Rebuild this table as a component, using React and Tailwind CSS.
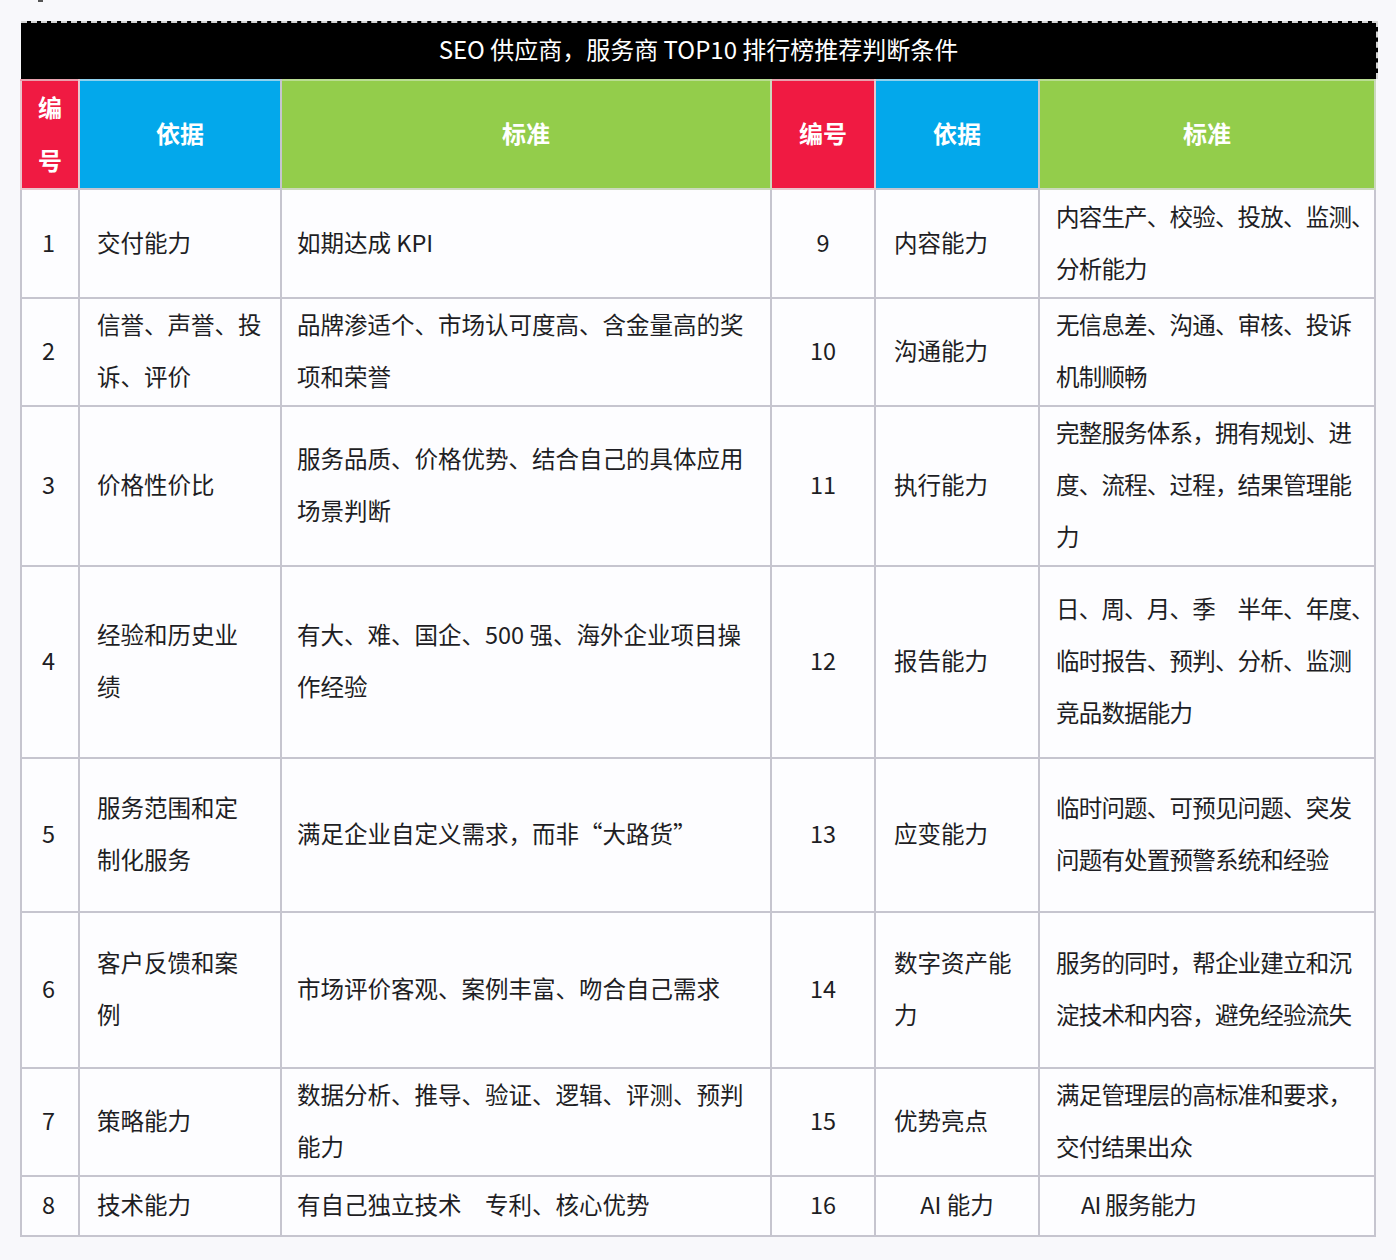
import React from "react";

const rows = [
  { h: "h-[109px]", a: "1", b: ["交付能力"], c: ["如期达成 KPI"], d: "9", e: ["内容能力"], f: ["内容生产、校验、投放、监测、", "分析能力"] },
  { h: "h-[108px]", a: "2", b: ["信誉、声誉、投", "诉、评价"], c: ["品牌渗适个、市场认可度高、含金量高的奖", "项和荣誉"], d: "10", e: ["沟通能力"], f: ["无信息差、沟通、审核、投诉", "机制顺畅"] },
  { h: "h-[160px]", a: "3", b: ["价格性价比"], c: ["服务品质、价格优势、结合自己的具体应用", "场景判断"], d: "11", e: ["执行能力"], f: ["完整服务体系，拥有规划、进", "度、流程、过程，结果管理能", "力"] },
  { h: "h-[192px]", a: "4", b: ["经验和历史业", "绩"], c: ["有大、难、国企、500 强、海外企业项目操", "作经验"], d: "12", e: ["报告能力"], f: ["日、周、月、季　半年、年度、", "临时报告、预判、分析、监测", "竞品数据能力"] },
  { h: "h-[154px]", a: "5", b: ["服务范围和定", "制化服务"], c: ["满足企业自定义需求，而非“大路货”"], d: "13", e: ["应变能力"], f: ["临时问题、可预见问题、突发", "问题有处置预警系统和经验"] },
  { h: "h-[156px]", a: "6", b: ["客户反馈和案", "例"], c: ["市场评价客观、案例丰富、吻合自己需求"], d: "14", e: ["数字资产能", "力"], f: ["服务的同时，帮企业建立和沉", "淀技术和内容，避免经验流失"] },
  { h: "h-[108px]", a: "7", b: ["策略能力"], c: ["数据分析、推导、验证、逻辑、评测、预判", "能力"], d: "15", e: ["优势亮点"], f: ["满足管理层的高标准和要求，", "交付结果出众"] },
  { h: "h-[60px]", a: "8", b: ["技术能力"], c: ["有自己独立技术　专利、核心优势"], d: "16", e: ["AI 能力"], f: ["AI 服务能力"], last: true },
];

function Lines({ lines }) {
  return (
    <div className="-translate-y-[2px]">
      {lines.map((l, i) => (
        <div key={i} className="whitespace-nowrap">
          {l}
        </div>
      ))}
    </div>
  );
}

const td = "border-2 border-[#c6c5cf] align-middle";

export default function App() {
  return (
    <div
      className="min-h-[1260px] w-[1396px] bg-[#f8f8fb] text-[#1e1e24]"
      style={{ fontFamily: '"Noto Sans CJK SC", "Noto Sans", sans-serif' }}
    >
      <div className="h-[2px] w-[5px] ml-[38px] bg-[#555]" />
      <div className="pt-[19px] pl-[20px]">
        <div className="ml-[1px] w-[1357px] h-[58px] bg-black border-t-2 border-r-2 border-dashed border-[#d4d4d4] flex items-center justify-center text-white text-[24px] pb-[5px]">
          SEO 供应商，服务商 TOP10 排行榜推荐判断条件
        </div>
        <table className="border-collapse table-fixed w-[1354px] text-[23.5px] leading-[52px] bg-[#fdfdff]">
          <colgroup>
            <col className="w-[58px]" />
            <col className="w-[202px]" />
            <col className="w-[490px]" />
            <col className="w-[104px]" />
            <col className="w-[164px]" />
            <col className="w-[336px]" />
          </colgroup>
          <thead>
            <tr className="h-[109px] text-white font-bold text-[24px]">
              <th className={`${td} bg-[#f01a42] border-[#e9c5cc] border-t-[#e8a0ad] font-bold text-center leading-[53px]`}>
                <div className="-translate-y-[2px]">
                  编<br />号
                </div>
              </th>
              <th className={`${td} bg-[#03a8eb] border-[#bfd8e6] border-t-[#8fd1ee] font-bold text-center`}>
                <div className="-translate-y-[2px]">依据</div>
              </th>
              <th className={`${td} bg-[#93cd4b] border-[#cbd9bd] border-t-[#b9dd92] font-bold text-center`}>
                <div className="-translate-y-[2px]">标准</div>
              </th>
              <th className={`${td} bg-[#f01a42] border-[#e9c5cc] border-t-[#e8a0ad] font-bold text-center`}>
                <div className="-translate-y-[2px]">编号</div>
              </th>
              <th className={`${td} bg-[#03a8eb] border-[#bfd8e6] border-t-[#8fd1ee] font-bold text-center`}>
                <div className="-translate-y-[2px]">依据</div>
              </th>
              <th className={`${td} bg-[#93cd4b] border-[#cbd9bd] border-t-[#b9dd92] font-bold text-center`}>
                <div className="-translate-y-[2px]">标准</div>
              </th>
            </tr>
          </thead>
          <tbody>
            {rows.map((r) => (
              <tr key={r.a} className={r.h}>
                <td className={`${td} text-center pr-[3px]`}>
                  <Lines lines={[r.a]} />
                </td>
                <td className={`${td} pl-[17px]`}>
                  <Lines lines={r.b} />
                </td>
                <td className={`${td} pl-[15px]`}>
                  <Lines lines={r.c} />
                </td>
                <td className={`${td} text-center`}>
                  <Lines lines={[r.d]} />
                </td>
                <td className={`${td} ${r.last ? "text-center" : "pl-[18px]"}`}>
                  <Lines lines={r.e} />
                </td>
                <td className={`${td} tracking-[-0.8px] ${r.last ? "pl-[41px]" : "pl-[16px]"}`}>
                  <Lines lines={r.f} />
                </td>
              </tr>
            ))}
          </tbody>
        </table>
      </div>
    </div>
  );
}
